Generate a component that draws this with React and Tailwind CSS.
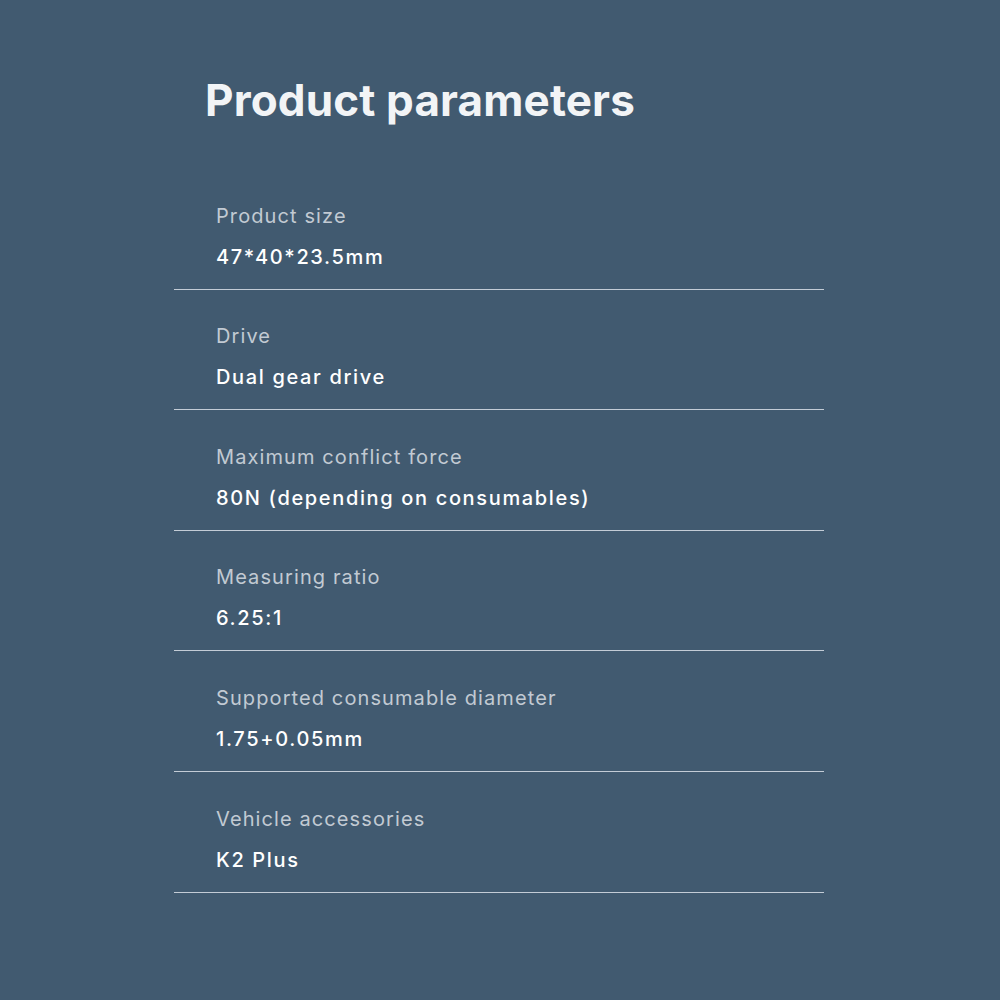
export default function App() {
  const rows = [
    ["Product size", "47*40*23.5mm"],
    ["Drive", "Dual gear drive"],
    ["Maximum conflict force", "80N (depending on consumables)"],
    ["Measuring ratio", "6.25:1"],
    ["Supported consumable diameter", "1.75+0.05mm"],
    ["Vehicle accessories", "K2 Plus"],
  ];
  return (
    <div className="w-[1000px] h-[1000px] bg-[#415a70] overflow-hidden" style={{ fontFamily: "Inter, 'Noto Sans', sans-serif" }}>
      <div className="pl-[205px] pt-[72px]">
        <h1 className="text-[44px] leading-[56px] font-bold text-[#f2f4f6] tracking-[0.15px]">Product parameters</h1>
      </div>
      <div className="ml-[174px] w-[650px] mt-[41px]">
        {rows.map(([label, value]) => (
          <div key={label} className="pl-[42px] pt-[32.6px] pb-[18px] border-b border-[#c3ccd6]">
            <div className="text-[20px] leading-[28px] text-[#c2cad3] tracking-[1.1px]">{label}</div>
            <div className="mt-[13px] text-[20px] leading-[28px] font-medium text-white tracking-[1.65px]">{value}</div>
          </div>
        ))}
      </div>
    </div>
  );
}
